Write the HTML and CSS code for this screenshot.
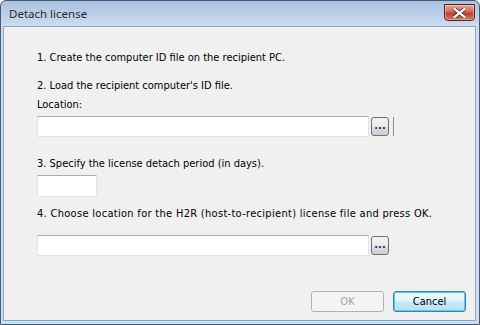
FILE: index.html
```html
<!DOCTYPE html>
<html lang="en">
<head>
  <meta charset="UTF-8" />
  <title>Detach license</title>
  <link rel="stylesheet" href="styles.css">
</head>
<body>
  <div class="window">
    <div class="titlebar">
      <span class="title">Detach license</span>
      <div class="close">
        <svg width="13" height="10" viewBox="0 0 13 10">
          <path d="M1.5 1 L11.5 9 M11.5 1 L1.5 9" stroke="#3a1a1a" stroke-width="3.8" stroke-linecap="square"/>
          <path d="M1.5 1 L11.5 9 M11.5 1 L1.5 9" stroke="#ffffff" stroke-width="2.4" stroke-linecap="square"/>
        </svg>
      </div>
    </div>

    <div class="client">
      <p class="step">1. Create the computer ID file on the recipient PC.</p>
      <p class="step gap-lg">2. Load the recipient computer's ID file.</p>
      <p class="step gap-sm">Location:</p>
      <div class="row">
        <input type="text" class="path">
        <button class="browse">...</button>
        <span class="sep"></span>
      </div>
      <p class="step gap-xl">3. Specify the license detach period (in days).</p>
      <input type="text" class="days">
      <p class="step gap-md wide">4. Choose location for the H2R (host-to-recipient) license file and press OK.</p>
      <div class="row row-last">
        <input type="text" class="path">
        <button class="browse">...</button>
      </div>
      <div class="actions">
        <button class="btn" disabled>OK</button>
        <button class="btn btn-default">Cancel</button>
      </div>
    </div>
  </div>
</body>
</html>
```

FILE: styles.css
```css
:root {
  --font: Tahoma, "DejaVu Sans Condensed", "DejaVu Sans", sans-serif;
  --client: #f0f0f0;
}
* {
  box-sizing: border-box;
}
body {
  margin: 0;
  width: 480px;
  height: 325px;
  overflow: hidden;
  font-family: var(--font);
  font-stretch: semi-condensed;
  font-size: 11px;
  color: #000;
}
.window {
  width: 480px;
  height: 325px;
  border: 1px solid #4a5a6e;
  border-radius: 6px 6px 0 0;
  background: linear-gradient(to bottom, #a9c3e2 0px, #c4d6ec 20px, #cfdff1 26px);
  display: flex;
  flex-direction: column;
  padding: 0 3px 3px 2px;
}
.titlebar {
  height: 25px;
  display: flex;
  align-items: flex-start;
  justify-content: space-between;
}
.title {
  font-family: "Noto Sans", "DejaVu Sans", sans-serif;
  font-stretch: normal;
  font-size: 11.5px;
  color: #2b2b2b;
  margin: 5px 0 0 6px;
}
.close {
  width: 31px;
  height: 17px;
  margin: 3px 1px 0 0;
  border: 1px solid #5a2020;
  border-radius: 0 0 4px 4px;
  background: linear-gradient(to bottom, #e8a493 0%, #d56a56 45%, #c2412e 55%, #d8785f 100%);
  box-shadow: inset 0 0 0 1px rgba(255, 255, 255, 0.35);
  display: flex;
  align-items: center;
  justify-content: center;
}
.client {
  flex: 1;
  background: var(--client);
  border: 1px solid #8aa4c2;
  border-bottom-color: #6ab0e0;
  padding: 24px 0 0 33px;
  display: flex;
  flex-direction: column;
  align-items: flex-start;
}
.step {
  margin: 0;
  line-height: 13px;
  white-space: nowrap;
}
.wide {
  letter-spacing: 0.3px;
}
.gap-lg { margin-top: 15px; }
.gap-sm { margin-top: 6px; }
.gap-xl { margin-top: 20px; }
.gap-md { margin-top: 10px; }
.row {
  display: flex;
  align-items: center;
  margin-top: 5px;
}
.row-last {
  margin-top: 15px;
}
input {
  height: 21px;
  border: 1px solid #e2e3ea;
  border-top-color: #abadb3;
  background: #fff;
  padding: 0 3px;
  font-family: var(--font);
  font-size: 11px;
  outline: none;
}
.path {
  width: 332px;
}
.days {
  width: 60px;
  height: 22px;
  margin-top: 5px;
}
.browse {
  width: 18px;
  height: 19px;
  margin-left: 2px;
  padding: 0 0 4px;
  border: 1px solid #707070;
  border-radius: 3px;
  background: linear-gradient(to bottom, #f2f2f2 0%, #ebebeb 48%, #dddddd 52%, #cfcfcf 100%);
  font-family: var(--font);
  font-size: 11px;
  font-weight: bold;
  line-height: 10px;
  color: #2c2a8c;
  display: flex;
  align-items: flex-end;
  justify-content: center;
}
.sep {
  width: 1px;
  height: 19px;
  margin-left: 4px;
  background: #8a8a8a;
}
.actions {
  align-self: stretch;
  display: flex;
  justify-content: flex-end;
  gap: 9px;
  margin-top: 35px;
  padding-right: 9px;
}
.btn {
  width: 73px;
  height: 21px;
  border: 1px solid #707070;
  border-radius: 3px;
  background: linear-gradient(to bottom, #f2f2f2 0%, #ebebeb 48%, #dddddd 52%, #cfcfcf 100%);
  font-family: var(--font);
  font-size: 11px;
  color: #000;
  padding: 0;
}
.btn:disabled {
  border-color: #adb2b5;
  background: #f4f4f4;
  color: #a3a3a3;
}
.btn-default {
  border-color: #3c7fb1;
  background: linear-gradient(to bottom, #f2f9fe 0%, #e3f3fd 48%, #c7e8fb 52%, #b8e1fa 100%);
  box-shadow: inset 0 0 0 1px #48d0f8;
}
```
